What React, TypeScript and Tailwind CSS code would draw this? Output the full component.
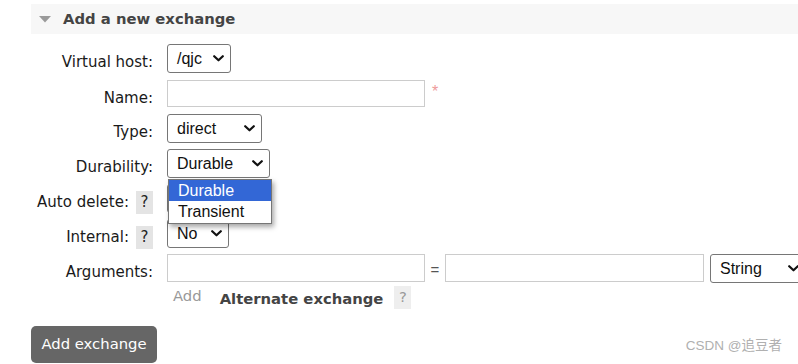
import React from "react";

const V = "font-['DejaVu_Sans',Verdana,sans-serif]";
const A = "font-['Liberation_Sans',Arial,sans-serif]";

function Chevron() {
  return (
    <svg width="11" height="7" viewBox="0 0 11 7" className="shrink-0">
      <path d="M1.2 1.2 L5.5 5.3 L9.8 1.2" fill="none" stroke="#111" strokeWidth="2.2" strokeLinecap="round" strokeLinejoin="round" />
    </svg>
  );
}

function Select({ value, w, children }: { value: string; w: string; children?: React.ReactNode }) {
  return (
    <div className={`relative flex h-[29px] ${w} shrink-0 items-center justify-between rounded-[3px] border border-[#767676] bg-white pl-[9px] pr-[6px] ${A} text-[16px] text-[#111]`}>
      <span className="leading-none">{value}</span>
      <Chevron />
      {children}
    </div>
  );
}

function Label({ text, help }: { text: string; help?: boolean }) {
  return (
    <div className={`flex w-[153px] shrink-0 items-start justify-end gap-[7px] ${V} text-[15px] text-[#1a1a1a]`}>
      <span className="pt-[8px] leading-[20px]">{text}</span>
      {help && (
        <span className="mt-[7px] flex h-[23px] w-[17px] items-center justify-center bg-[#e4e4e4] leading-none text-[#222]">?</span>
      )}
    </div>
  );
}

function Input({ w }: { w: string }) {
  return <div className={`h-[28px] ${w} shrink-0 border border-[#cccccc] bg-white`} />;
}

export default function App() {
  return (
    <div className="relative h-[364px] w-[798px] overflow-hidden bg-white">
      <div className="pt-[4px]">
        <div className="ml-[31px] flex h-[30px] items-center bg-[#f7f7f7]">
          <svg width="12" height="7" viewBox="0 0 12 7" className="ml-[8px]">
            <path d="M0 0 H12 L6 6.5 Z" fill="#9a9a9a" />
          </svg>
          <span className={`ml-[12px] ${V} text-[14.8px] font-bold text-[#444]`}>Add a new exchange</span>
        </div>

        <div className="mt-[10px] flex flex-col">
          <div className="flex h-[29px] gap-[14px]">
            <Label text="Virtual host:" />
            <Select value="/qjc" w="w-[64px]" />
          </div>

          <div className="mt-[7px] flex h-[27px] gap-[14px]">
            <Label text="Name:" />
            <div className="flex items-start">
              <div className="h-[27px] w-[258px] border border-[#cccccc] bg-white" />
              <span className={`ml-[7px] mt-[4px] ${A} text-[16px] leading-[16px] text-[#ee9a9a]`}>*</span>
            </div>
          </div>

          <div className="mt-[7px] flex h-[29px] gap-[14px]">
            <Label text="Type:" />
            <Select value="direct" w="w-[95px]" />
          </div>

          <div className="relative z-10 mt-[6px] flex h-[29px] gap-[14px]">
            <Label text="Durability:" />
            <Select value="Durable" w="w-[103px]">
              <div className={`absolute left-[0px] top-[29px] w-[104px] border border-[#767676] bg-white shadow-[2px_3px_5px_rgba(0,0,0,0.35)] ${A} text-[16px]`}>
                <div className="flex h-[21px] items-center bg-[#3367d6] pl-[9px] text-white">Durable</div>
                <div className="flex h-[22px] items-center pl-[9px] text-[#111]">Transient</div>
              </div>
            </Select>
          </div>

          <div className="mt-[6px] flex h-[29px] gap-[14px]">
            <Label text="Auto delete:" help />
            <Select value="" w="w-[62px]" />
          </div>

          <div className="mt-[6px] flex h-[29px] gap-[14px]">
            <Label text="Internal:" help />
            <Select value="No" w="w-[62px]" />
          </div>

          <div className="mt-[6px] flex h-[29px] gap-[14px]">
            <Label text="Arguments:" />
            <div className="flex items-start">
              <Input w="w-[258px]" />
              <span className={`mx-[5px] mt-[5px] w-[10px] text-center ${A} text-[15px] text-[#555]`}>=</span>
              <Input w="w-[259px]" />
              <div className="ml-[6px]">
                <Select value="String" w="w-[96px]" />
              </div>
            </div>
          </div>

          <div className="mt-[3px] flex h-[23px] items-start">
            <div className="w-[173px] shrink-0" />
            <span className={`mt-[1px] ${V} text-[14.8px] leading-[18px] text-[#999]`}>Add</span>
            <span className={`ml-[18px] mt-[3px] ${V} text-[14.8px] font-bold leading-[20px] text-[#444]`}>Alternate exchange</span>
            <span className={`ml-[11px] flex h-[23px] w-[17px] items-center justify-center bg-[#eeeeee] ${V} text-[14.8px] leading-none text-[#999]`}>?</span>
          </div>

          <div className="ml-[31px] mt-[17px] flex h-[37px] w-[126px] items-center justify-center rounded-[5px] bg-[#666666]">
            <span className={`${V} text-[14.8px] text-white`}>Add exchange</span>
          </div>
        </div>
      </div>

      <div className={`absolute bottom-[8px] right-[16px] font-['Liberation_Sans','Noto_Sans_CJK_SC',sans-serif] text-[13.5px] text-[#b0b0b0]`}>
        CSDN @追豆者
      </div>
    </div>
  );
}
